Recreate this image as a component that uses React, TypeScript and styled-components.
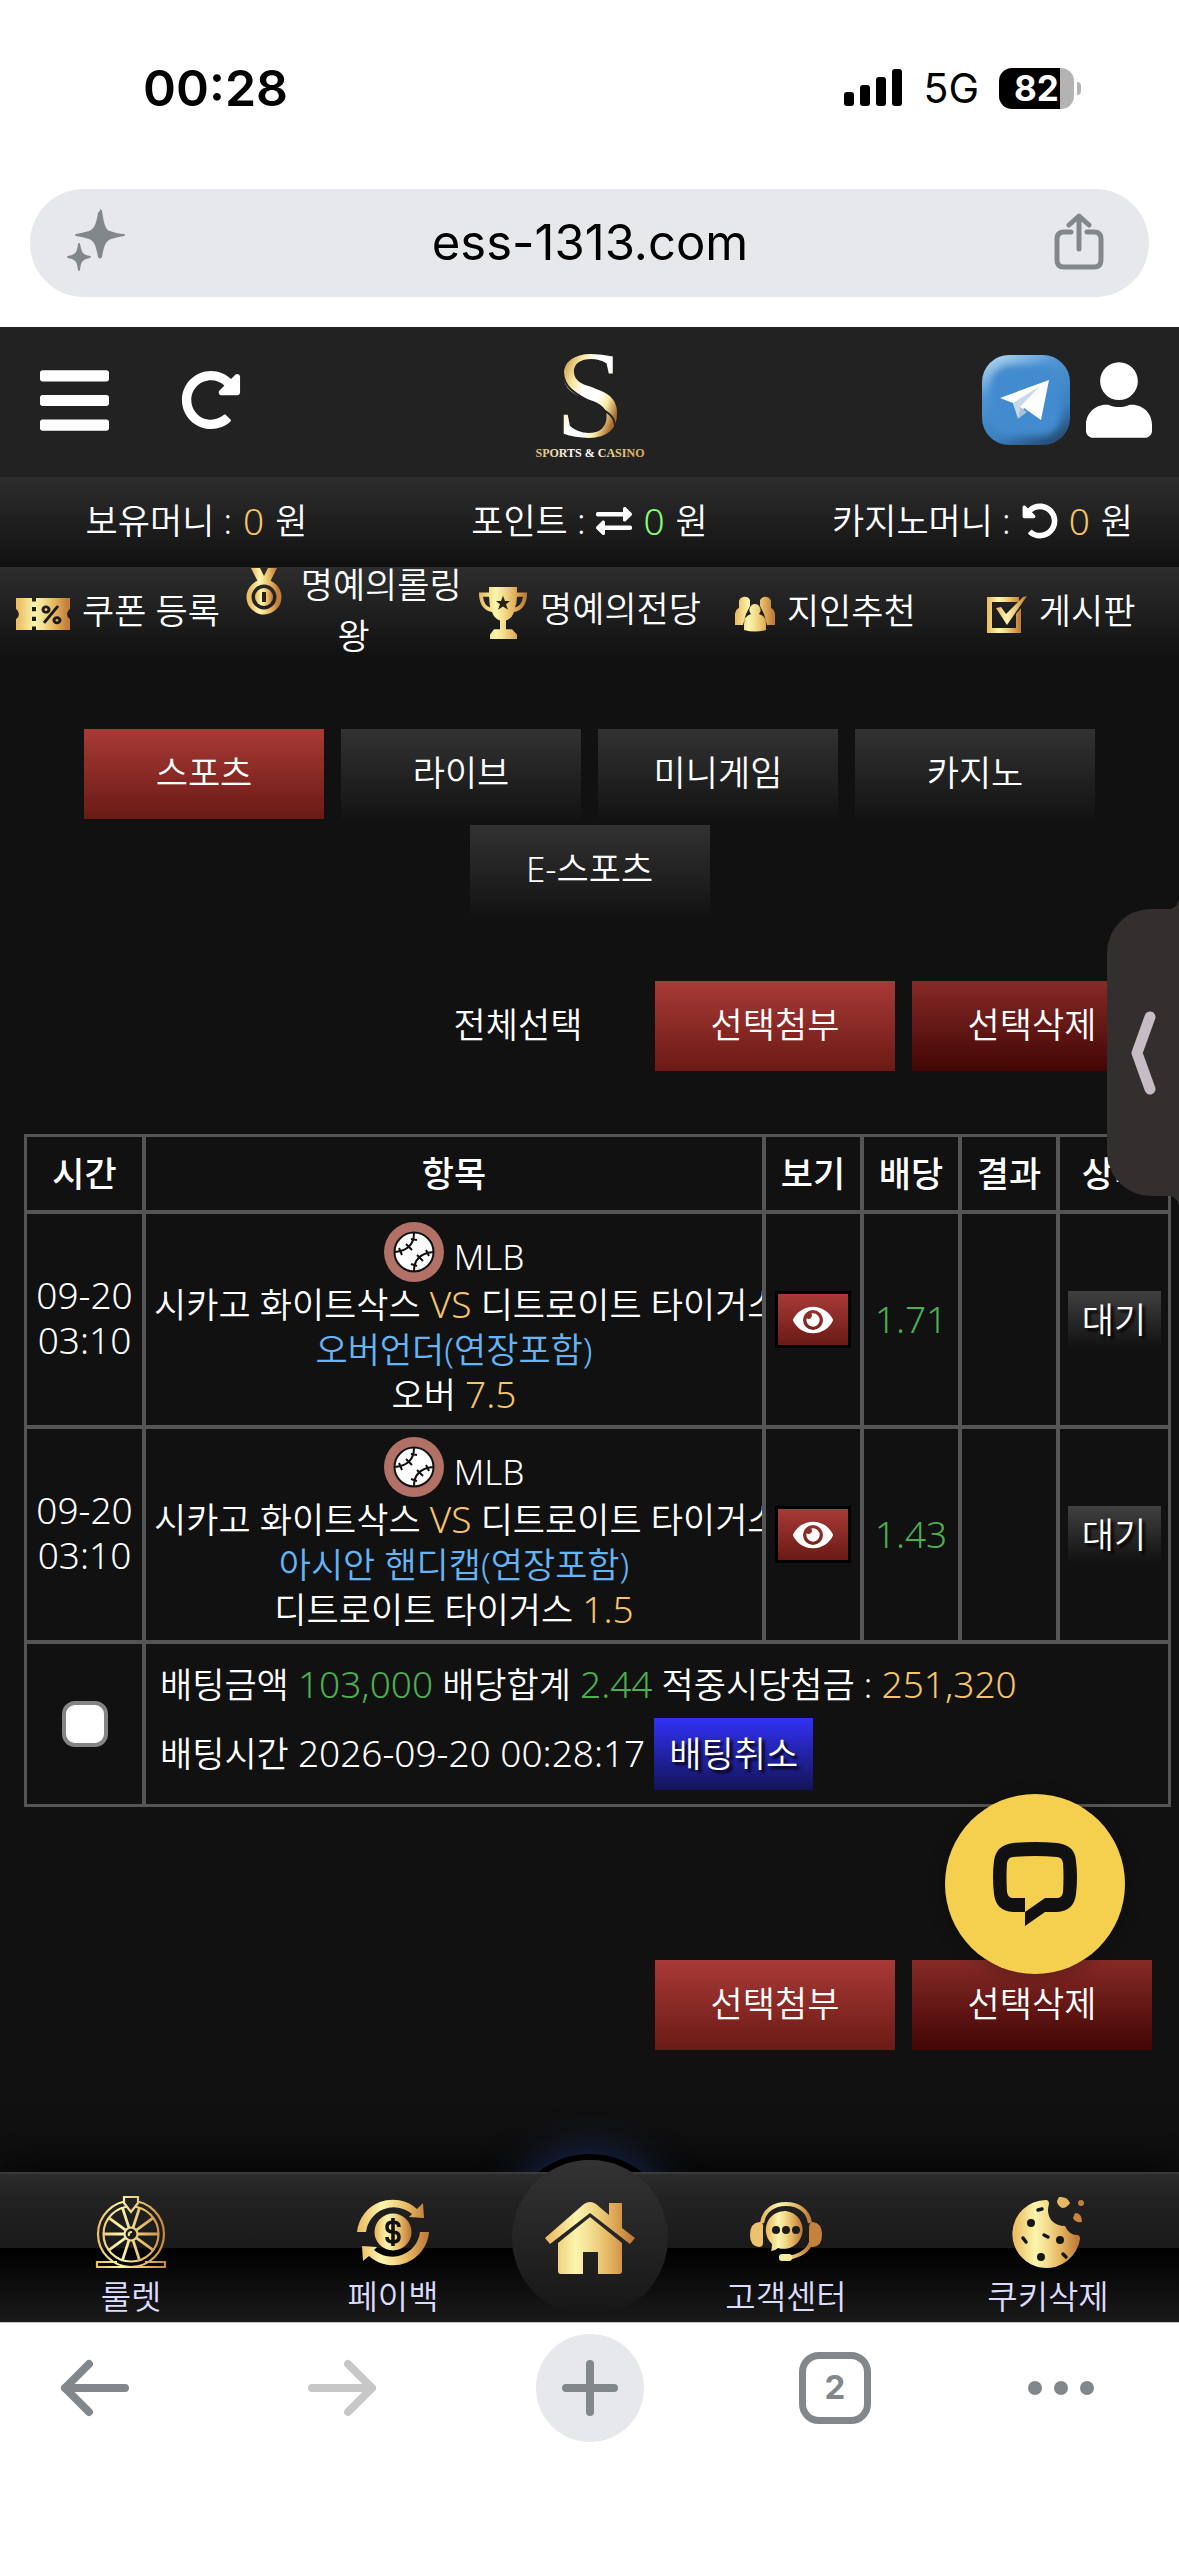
import React from "react";
import styled, { createGlobalStyle } from "styled-components";
import { FaBars, FaExchangeAlt, FaEye, FaRedoAlt, FaUndoAlt, FaUser } from "react-icons/fa";

const GlobalStyle = createGlobalStyle`
  *, *::before, *::after { box-sizing: border-box; }
  html, body { margin: 0; background: #fff; }
  body { font-family: "Noto Sans", "Noto Sans CJK KR", sans-serif; font-weight: 350; font-size: 35px; line-height: 45px; color: #fff; }
  button { font: inherit; color: inherit; border: 0; padding: 0; background: none; cursor: pointer; }
  a { color: inherit; text-decoration: none; }
  svg { display: block; flex: none; overflow: visible; }
`;

const ui = `"Inter", "Liberation Sans", sans-serif`;
const fade = (from: string, to: string) => `linear-gradient(${from}, ${to})`;

const Page = styled.div`
  min-height: 100vh;
  display: flex;
  flex-direction: column;
`;

/* ---------- browser chrome ---------- */
const StatusBar = styled.div`
  display: flex;
  justify-content: space-between;
  align-items: center;
  height: 176px;
  padding: 0 98px 0 143px;
  font-family: ${ui};
  color: #000;
`;
const Clock = styled.time`
  font-size: 50px;
  font-weight: 600;
`;
const StatusIcons = styled.div`
  display: flex;
  align-items: center;
  gap: 20px;
`;
const Network = styled.span`
  font-size: 41px;
  font-weight: 400;
`;
const Battery = styled.div`
  display: flex;
  align-items: center;
  gap: 3px;
  &::after {
    content: "";
    width: 4px;
    height: 13px;
    border-radius: 0 4px 4px 0;
    background: #b3b3b3;
  }
`;
const BatteryBody = styled.span`
  width: 75px;
  height: 41px;
  border-radius: 13px;
  background: linear-gradient(90deg, #000 82%, #b3b3b3 82%);
  color: #fff;
  font-size: 35px;
  font-weight: 700;
  line-height: 41px;
  text-align: center;
`;
const AddressRow = styled.div`
  padding: 13px 30px 30px;
`;
const AddressBar = styled.div`
  display: flex;
  align-items: center;
  justify-content: space-between;
  height: 108px;
  padding: 0 45px 2px 36px;
  border-radius: 54px;
  background: #e7e8ec;
`;
const Address = styled.span`
  font-family: ${ui};
  font-size: 49px;
  font-weight: 400;
  color: #000;
`;
const BrowserBar = styled.nav`
  position: relative;
  z-index: 1;
  display: grid;
  grid-template-columns: 190fr 304fr 192fr 298fr 154fr;
  justify-items: center;
  align-items: center;
  height: 234px;
  padding: 0 41px 104px 0;
  border-top: 1px solid #c4c4c4;
  background: #fff;
`;
const NewTab = styled.button`
  display: grid;
  place-items: center;
  width: 108px;
  height: 108px;
  border-radius: 50%;
  background: #e7e8ec;
`;
const TabCount = styled.button`
  width: 72px;
  height: 72px;
  border: 7px solid #82878b;
  border-radius: 20px;
  font-family: ${ui};
  font-size: 33px;
  font-weight: 700;
  color: #82878b;
`;

/* ---------- site header ---------- */
const Site = styled.div`
  position: relative;
  flex: 1;
  background: #111;
`;
const Header = styled.header`
  display: grid;
  grid-template-columns: 1fr auto 1fr;
  align-items: center;
  height: 150px;
  padding: 6px 27px 0;
  background: #222;
`;
const HeaderSide = styled.div<{ $end?: boolean }>`
  display: flex;
  align-items: center;
  justify-content: ${(p) => (p.$end ? "flex-end" : "flex-start")};
  gap: ${(p) => (p.$end ? 16 : 72)}px;
  margin-left: ${(p) => (p.$end ? 0 : 13)}px;
  padding-bottom: 10px;
`;
const Balances = styled.section`
  display: grid;
  grid-template-columns: repeat(3, 1fr);
  align-items: center;
  height: 90px;
  padding-bottom: 3px;
  background: ${fade("#2d2d2d", "#111")};
`;
const Balance = styled.div`
  display: flex;
  align-items: center;
  justify-content: center;
  gap: 11px;
`;
const Shortcuts = styled.nav`
  display: grid;
  grid-template-columns: repeat(5, 1fr);
  grid-auto-rows: 86px;
  align-items: center;
  padding-bottom: 4px;
  line-height: 49px;
  text-align: center;
  background: ${fade("#2d2d2d", "#111")};
  svg { display: inline-block; vertical-align: middle; margin: -4px 12px -4px 0; }
`;

/* ---------- shared pieces ---------- */
type Tone = "red" | "deep" | "dark" | "plain";
const tones: Record<Tone, string> = {
  red: fade("#a83a36", "#6a1a15"),
  deep: fade("#862a27", "#420604"),
  dark: fade("#323232", "#131313"),
  plain: "transparent",
};
const Button = styled.button<{ $tone: Tone }>`
  width: 240px;
  height: 90px;
  padding-bottom: 4px;
  background: ${(p) => tones[p.$tone]};
`;
const Figure = styled.span<{ $c?: string }>`
  font-size: 37px;
  line-height: 1;
  color: ${(p) => p.$c ?? "inherit"};
`;
const GOLD = "#f5c469";
const GREEN = "#4caf50";
const BLUE = "#64b5f6";

const Tabs = styled.nav`
  display: flex;
  flex-wrap: wrap;
  justify-content: center;
  gap: 6px 17px;
  padding-top: 72px;
`;
const Actions = styled.div<{ $top: number }>`
  display: flex;
  justify-content: flex-end;
  gap: 17px;
  padding: ${(p) => p.$top}px 27px 0;
`;
const TableArea = styled.div`
  padding: 63px 8px 0 24px;
`;

/* ---------- bets table ---------- */
const BetTable = styled.table`
  width: 100%;
  table-layout: fixed;
  border: 3px solid #555;
  border-collapse: separate;
  border-spacing: 0;
  text-align: center;
  th, td { padding: 8px 0; overflow: hidden; vertical-align: middle; }
  th { height: 73px; padding: 0; font-weight: 500; white-space: nowrap; }
  th + th, td + td { border-left: 4px solid #555; }
  td { border-top: 4px solid #555; }
`;
const Col = styled.col<{ $w?: number }>`
  width: ${(p) => (p.$w ? `${p.$w}px` : "auto")};
`;
const When = styled.td`
  && { padding: 8px 0 12px; }
`;
const Match = styled.td`
  && { padding: 8px; }
`;
const League = styled.div`
  display: flex;
  align-items: flex-end;
  justify-content: center;
  gap: 10px;
  line-height: 50px;
`;
const Line = styled.div<{ $c?: string }>`
  height: 45px;
  color: ${(p) => p.$c ?? "inherit"};
  white-space: nowrap;
`;
const ViewButton = styled.button`
  display: inline-grid;
  place-items: center;
  width: 76px;
  height: 57px;
  border: 3px solid #000;
  background: ${tones.red};
  vertical-align: middle;
`;
const State = styled.button`
  width: 93px;
  height: 57px;
  background: ${fade("#404040", "#111")};
  text-shadow: 3px 3px 3px #000;
  vertical-align: middle;
`;
const Summary = styled.td`
  && { padding: 8px 14px 14px; }
  text-align: left;
  line-height: 66px;
`;
const Cancel = styled.button`
  height: 72px;
  padding: 0 15px;
  line-height: 72px;
  background: ${fade("#3131f6", "#141458")};
  text-shadow: 3px 3px 3px #000;
`;
const Check = styled.input`
  appearance: none;
  display: block;
  width: 46px;
  height: 46px;
  margin: 0 auto;
  border: 4px solid #858585;
  border-radius: 13px;
  background: #fff;
`;

/* ---------- floating controls ---------- */
const Drawer = styled.button`
  position: absolute;
  top: 582px;
  right: 0;
  display: grid;
  place-items: center;
  width: 72px;
  height: 287px;
  border-radius: 44px 0 0 44px;
  background: #332f2f;
  &::before, &::after {
    content: "";
    position: absolute;
    right: 0;
    width: 9px;
    height: 12px;
    background: radial-gradient(9px 12px at 0 0, transparent 98%, #332f2f 100%);
  }
  &::before { top: -12px; }
  &::after { bottom: -12px; transform: scaleY(-1); }
`;
const Chat = styled.button`
  position: absolute;
  right: 54px;
  bottom: 198px;
  display: grid;
  place-items: center;
  width: 180px;
  height: 180px;
  border-radius: 50%;
  background: #f5d04e;
  box-shadow: 0 3px 18px rgba(0, 0, 0, 0.25);
`;

/* ---------- site bottom nav ---------- */
const Dock = styled.nav`
  position: relative;
  z-index: 0;
  display: flex;
  height: 150px;
  box-shadow: 0 -10px 36px 4px #060606;
  font-size: 33px;
  color: #dcdcff;
  &::before {
    content: "";
    position: absolute;
    inset: 0;
    z-index: -1;
    border-top: 2px solid #3a3a3a;
    background: linear-gradient(#2c2c2c, #222 16%, #1a1a1a 50%, #000 50%, #1a1a1a);
  }
`;
const DockItem = styled.a`
  flex: 2 1 0;
  display: flex;
  flex-direction: column;
  align-items: center;
  justify-content: flex-end;
  padding-bottom: 3px;
`;
const DockIcon = styled.span`
  display: grid;
  place-items: center;
  height: 84px;
`;
const HomeSlot = styled.div`
  flex: 1 1 0;
  min-width: 0;
  display: flex;
  justify-content: center;
`;
const HomeLink = styled.a`
  position: relative;
  flex: none;
  display: grid;
  place-items: center;
  width: 156px;
  height: 156px;
  margin-top: -12px;
  border-radius: 50%;
  background: ${fade("#333", "#161616")};
  &::before {
    content: "";
    position: absolute;
    inset: 0;
    z-index: -2;
    border-radius: 50%;
    box-shadow: 0 0 0 6px #000, 0 0 40px 8px #1a2a58;
  }
`;

/* ---------- drawings ---------- */
const GoldFill = ({ id }: { id: string }) => (
  <defs>
    <linearGradient id={id} x1="0" x2="1" y1="0" y2="0">
      <stop offset="0.05" stopColor="#ecbf67" />
      <stop offset="0.34" stopColor="#fbf5ad" />
      <stop offset="0.5" stopColor="#f4df92" />
      <stop offset="0.7" stopColor="#e6b863" />
      <stop offset="0.95" stopColor="#c27f3b" />
    </linearGradient>
  </defs>
);

const Sparkle = () => (
  <svg width="60" height="66" viewBox="0 0 60 66" fill="#82878b">
    <path d="M34 0q1 0 2 2c2 14 4 19 8 20q8 3 14 3q2 1 0 2q-6 1-13 3c-5 2-7 6-9 18q-2 3-4 0c-2-12-4-16-9-18q-6-2-13-3q-2-1 0-2q6-1 13-3c5-2 7-6 9-18q1-2 2-2z" />
    <path d="M13 34q1 0 1 1c2 8 2 9 6 11l4 1q2 0 0 2l-4 1c-4 2-5 3-6 11q-1 2-2 0c-1-8-2-9-6-11l-4-1q-2-1 0-2l4-1c4-2 5-3 6-11q0-1 1-1z" />
  </svg>
);
const Share = () => (
  <svg width="50" height="58" viewBox="0 0 50 58" fill="none" stroke="#82878b" strokeWidth="5" strokeLinecap="round" strokeLinejoin="round">
    <path d="M17 19h-7q-7 0-7 7v21q0 7 7 7h30q7 0 7-7V26q0-7-7-7h-7M25 36V4M15 12L25 3l10 9" />
  </svg>
);
const Signal = () => (
  <svg width="59" height="38" viewBox="0 0 59 38">
    <rect x="0" y="23" width="10" height="14" rx="3" />
    <rect x="16" y="16" width="10" height="21" rx="3" />
    <rect x="32" y="8" width="10" height="29" rx="3" />
    <rect x="48" y="0" width="10" height="37" rx="3" />
  </svg>
);
const Logo = () => (
  <svg width="112" height="110" viewBox="0 0 112 110" role="img" aria-label="S Sports & Casino">
    <defs>
      <linearGradient id="logoGold" x1="0" x2="1" y1="0.1" y2="0.9">
        <stop offset="0.15" stopColor="#c9994a" />
        <stop offset="0.3" stopColor="#f8e7a0" />
        <stop offset="0.42" stopColor="#ffffff" />
        <stop offset="0.58" stopColor="#ffffff" />
        <stop offset="0.68" stopColor="#f7e9a2" />
        <stop offset="0.8" stopColor="#a8692e" />
        <stop offset="1" stopColor="#f3d487" />
      </linearGradient>
      <linearGradient id="logoWord" x1="0" x2="1">
        <stop offset="0" stopColor="#dcb867" />
        <stop offset="0.35" stopColor="#fff" />
        <stop offset="0.55" stopColor="#fff" />
        <stop offset="0.7" stopColor="#eed58e" />
        <stop offset="1" stopColor="#d2a75a" />
      </linearGradient>
    </defs>
    <text x="56" y="87" textAnchor="middle" fontFamily="Liberation Serif, serif" fontSize="125" fontWeight="400" fill="url(#logoGold)">S</text>
    <path d="M29 22c1 17 14 22 29 31s23 12 23 24" fill="none" stroke="#222" strokeWidth="2" />
    <text x="56" y="107" textAnchor="middle" fontFamily="Liberation Serif, serif" fontSize="12" fontWeight="700" fill="url(#logoWord)">SPORTS &amp; CASINO</text>
  </svg>
);
const Telegram = () => (
  <svg width="88" height="90" viewBox="0 0 88 90">
    <defs>
      <linearGradient id="tgEdge" x1="0.2" x2="0.7" y1="0" y2="1">
        <stop offset="0" stopColor="#a9d0ee" />
        <stop offset="0.3" stopColor="#4f95d3" />
        <stop offset="0.75" stopColor="#3b7fbe" />
        <stop offset="1" stopColor="#27507b" />
      </linearGradient>
      <filter id="tgSoft"><feGaussianBlur stdDeviation="3" /></filter>
    </defs>
    <rect width="88" height="90" rx="27" fill="url(#tgEdge)" />
    <rect x="9" y="11" width="70" height="69" rx="20" fill="#438bcf" filter="url(#tgSoft)" />
    <path d="M18 43L67 25l-8 40-17-12-5 10-6-15z" fill="#fff" />
    <path d="M31 48L58 31 38 52l-2 12z" fill="#c8daea" />
    <path d="M38 52l7 5-9 7z" fill="#a9c3d8" />
  </svg>
);
const Coupon = () => (
  <svg width="54" height="32" viewBox="0 0 54 36" preserveAspectRatio="none">
    <GoldFill id="gCoupon" />
    <path d="M0 0h16v4h4V0h34v12q-6 6 0 12v12H20v-4h-4v4H0V24q6-6 0-12z" fill="url(#gCoupon)" />
    <path d="M16 10h4v5h-4zM16 21h4v5h-4z" fill="#1c1c1c" />
    <g stroke="#1c1c1c" strokeWidth="3" fill="none"><path d="M28 28L42 9" /><circle cx="30" cy="13" r="3" /><circle cx="41" cy="25" r="3" /></g>
  </svg>
);
const Medal = () => (
  <svg width="43" height="52" viewBox="0 0 43 52">
    <GoldFill id="gMedal" />
    <path d="M5 5h9l4 8 4-8h9l-7 14H12z" fill="url(#gMedal)" />
    <circle cx="18" cy="34" r="15" fill="none" stroke="url(#gMedal)" strokeWidth="5" />
    <circle cx="18" cy="34" r="9" fill="url(#gMedal)" />
    <path d="M16 29h4v10h-4z" fill="#2a2212" />
  </svg>
);
const Trophy = () => (
  <svg width="50" height="54" viewBox="0 0 50 50" preserveAspectRatio="none">
    <GoldFill id="gTrophy" />
    <path d="M11 1h28v5h10q0 16-13 18-2 6-8 8v8h6l5 5v4H12v-4l4-5h6v-8q-6-2-8-8Q1 22 1 6h10zm0 9H5q1 8 7 10zm28 0q0 6-2 10 7-2 8-10z" fill="url(#gTrophy)" />
    <path d="M25 9l2 5h5l-4 3 2 5-5-3-5 3 2-5-4-3h5z" fill="#2a2212" />
  </svg>
);
const People = () => (
  <svg width="40" height="36" viewBox="0 0 40 36">
    <GoldFill id="gPeople" />
    <g fill="url(#gPeople)">
      <path d="M4 5a6 6 0 0 1 11-1v6l-4 8-3 11H0V18q1-5 4-6zM36 5a6 6 0 0 0-11-1v6l4 8 3 11h8V18q-1-5-4-6zM20 8a6 6 0 0 1 4 10q7 2 7 10v6q-11 3-22 0v-6q0-8 7-10a6 6 0 0 1 4-10z" />
    </g>
  </svg>
);
const CheckBoard = () => (
  <svg width="40" height="37" viewBox="0 0 40 37">
    <GoldFill id="gBoard" />
    <path d="M0 1h32v5H5v26h24V18l5-6v25H0z" fill="url(#gBoard)" />
    <path d="M9 12l5-1 5 7L36 1l4-1L20 29z" fill="url(#gBoard)" />
  </svg>
);
const Baseball = () => (
  <svg width="60" height="60" viewBox="0 0 60 60" fill="none" stroke="#111" strokeWidth="2">
    <circle cx="30" cy="30" r="30" fill="#b27166" stroke="none" />
    <circle cx="30" cy="30" r="19.5" fill="#fff" />
    <path d="M30 11q0 17-19 19M49 30q-19 2-19 19" />
    <path d="M27 17l6 1M22 22l6 6M15 26l3 7M42 28l3 6M33 33l6 6M27 42l6 2" />
  </svg>
);
const Chevron = () => (
  <svg width="28" height="84" viewBox="0 0 28 84" fill="none" stroke="#c6bcc4" strokeWidth="11" strokeLinecap="round" strokeLinejoin="round">
    <path d="M21 6L8 42l13 36" />
  </svg>
);
const ChatIcon = () => (
  <svg width="84" height="84" viewBox="0 0 84 84" fill="#111">
    <path fillRule="evenodd" d="M20 1q22-2 44 0 18 2 19 18 2 16 0 33-2 17-19 18H52L32 84V56H20q-5 0-6-6-1-16 0-29 1-6 6-6 22-2 44 0 5 0 6 6 1 14 0 29-1 6-6 6H52L32 70H20Q3 69 1 52q-2-17 0-33Q3 3 20 1z" />
  </svg>
);
const Roulette = () => (
  <svg width="72" height="72" viewBox="0 0 72 72" fill="none" stroke="url(#gWheel)" strokeWidth="2.2">
    <defs>
      <linearGradient id="gWheel" gradientUnits="userSpaceOnUse" x1="0" x2="72" y1="0" y2="0">
        <stop offset="0.05" stopColor="#ecbf67" /><stop offset="0.35" stopColor="#fbf5ad" /><stop offset="0.7" stopColor="#e6b863" /><stop offset="1" stopColor="#c27f3b" />
      </linearGradient>
    </defs>
    <circle cx="36" cy="38" r="33" />
    <circle cx="36" cy="38" r="27.5" />
    <circle cx="36" cy="38" r="6.5" />
    <path d="M34 40q-1-4 3-4" />
    <path
      strokeWidth="2.8"
      d={Array.from({ length: 10 }, (_, i) => {
        const a = (i * Math.PI) / 5;
        const at = (r: number) => `${36 + r * Math.cos(a)} ${38 + r * Math.sin(a)}`;
        return `M${at(7)}L${at(27)}`;
      }).join("")}
    />
    <path d="M29 1h14v6l-7 9-7-9z" fill="#222" />
    <path d="M22 66H2v5h68v-5H50" />
  </svg>
);
const Payback = () => (
  <svg width="72" height="72" viewBox="0 0 72 72">
    <GoldFill id="gPay" />
    <path d="M0 36A36 36 0 0 1 60 13l6-6 1 15-15-1 3-3A28 28 0 0 0 9 36zM72 36A36 36 0 0 1 12 60l-6 5-1-15 15 1-3 3A28 28 0 0 0 63 36z" fill="url(#gPay)" />
    <circle cx="36" cy="36" r="18.5" fill="url(#gPay)" />
    <path d="M42 31q0-5-6-5t-6 5 6 5 6 5-6 5-6-5M36 22v28" fill="none" stroke="#111" strokeWidth="3.6" />
  </svg>
);
const Home = () => (
  <svg width="90" height="72" viewBox="0 0 90 72">
    <GoldFill id="gHome" />
    <path d="M39 2q6-4 12 0l13 11V1h13v25l13 10-5 6L45 11 5 42l-5-6zM45 15l32 26v28q0 3-3 3H53V50H38v22H16q-3 0-3-3V41z" fill="url(#gHome)" />
  </svg>
);
const Headset = () => (
  <svg width="72" height="60" viewBox="0 0 72 60">
    <GoldFill id="gHead" />
    <path
      d="M12 21C14 8 24 2 36 2s22 6 24 19M61 40q-4 13-24 16"
      fill="none"
      stroke="url(#gHead)"
      strokeWidth="4"
    />
    <g fill="url(#gHead)">
      <path d="M36 9a19 19 0 1 1-8 37q-3 3-7 3 1-3 1-7A19 19 0 0 1 36 9z" />
    </g>
    <path d="M9 20q5 0 4 6v15q0 4-4 4-9-1-9-12 0-12 9-13z" fill="#ecc26c" />
    <path d="M63 20q-4 0-4 6v15q0 4 4 4 9-1 9-12 0-12-9-13z" fill="#c5823d" />
    <rect x="29" y="52" width="13" height="7" rx="3" fill="#f8eb9f" />
    <g fill="#1c1c1c"><circle cx="26" cy="28" r="4" /><circle cx="36" cy="28" r="4" /><circle cx="46" cy="28" r="4" /></g>
  </svg>
);
const Cookie = () => (
  <svg width="72" height="72" viewBox="0 0 72 72">
    <GoldFill id="gCookie" />
    <g fill="url(#gCookie)">
      <path d="M34 4q3 0 3 4-3 10 3 17 5 5 13 5 4 9 12 9 3 0 3 4A34 34 0 1 1 34 4z" />
    </g>
    <path d="M47 1q8-1 11 6-3 5-8 5-5-3-5-7z" fill="#e6b863" />
    <path d="M63 17q7 0 7 9-7 1-9-4z" fill="#c9843e" />
    <circle cx="69" cy="7" r="3" fill="#c27f3b" />
    <g fill="#161616"><circle cx="19" cy="27" r="4" /><circle cx="48" cy="44" r="4" /><circle cx="29" cy="61" r="4" /></g>
    <path d="M26 14l4-1M11 42l3 4M32 39l4 2M51 58l3 3" stroke="#161616" strokeWidth="3.5" strokeLinecap="round" />
  </svg>
);
const Arrow = ({ forward }: { forward?: boolean }) => (
  <svg width="68" height="56" viewBox="0 0 68 56" fill="none" stroke={forward ? "#c7c7c7" : "#82878b"} strokeWidth="8" strokeLinecap="round" strokeLinejoin="round">
    <path d={forward ? "M4 28h60M40 4l24 24-24 24" : "M64 28H4M28 4L4 28l24 24"} />
  </svg>
);
const Plus = () => (
  <svg width="56" height="56" viewBox="0 0 56 56" stroke="#82878b" strokeWidth="8" strokeLinecap="round">
    <path d="M28 4v48M4 28h48" />
  </svg>
);
const Dots = () => (
  <svg width="68" height="16" viewBox="0 0 68 16" fill="#82878b">
    <circle cx="8" cy="8" r="7" /><circle cx="34" cy="8" r="7" /><circle cx="60" cy="8" r="7" />
  </svg>
);

/* ---------- data ---------- */
const shortcuts = [
  { label: "쿠폰 등록", icon: <Coupon /> },
  { label: "명예의롤링왕", icon: <Medal /> },
  { label: "명예의전당", icon: <Trophy /> },
  { label: "지인추천", icon: <People /> },
  { label: "게시판", icon: <CheckBoard /> },
];
const tabs = ["스포츠", "라이브", "미니게임", "카지노", "E-스포츠"];
const bets = [
  { market: "오버언더(연장포함)", pick: "오버", line: "7.5", odds: "1.71" },
  { market: "아시안 핸디캡(연장포함)", pick: "디트로이트 타이거스", line: "1.5", odds: "1.43" },
];

const DockLink = ({ label, icon }: { label: string; icon: React.ReactNode }) => (
  <DockItem href="#">
    <DockIcon>{icon}</DockIcon>
    {label}
  </DockItem>
);

export default function App() {
  return (
    <Page>
      <GlobalStyle />
      <StatusBar>
        <Clock>00:28</Clock>
        <StatusIcons>
          <Signal />
          <Network>5G</Network>
          <Battery><BatteryBody>82</BatteryBody></Battery>
        </StatusIcons>
      </StatusBar>
      <AddressRow>
        <AddressBar>
          <Sparkle />
          <Address>ess-1313.com</Address>
          <button aria-label="공유"><Share /></button>
        </AddressBar>
      </AddressRow>

      <Site>
        <Header>
          <HeaderSide>
            <button aria-label="메뉴"><FaBars size={79} style={{ width: 69 }} /></button>
            <button aria-label="새로고침"><FaRedoAlt size={60} /></button>
          </HeaderSide>
          <Logo />
          <HeaderSide $end>
            <a href="#" aria-label="텔레그램"><Telegram /></a>
            <a href="#" aria-label="내 정보"><FaUser size={76} style={{ width: 66 }} /></a>
          </HeaderSide>
        </Header>
        <Balances>
          <Balance>보유머니 : <Figure $c={GOLD}>0</Figure> 원</Balance>
          <Balance>포인트 : <FaExchangeAlt size={36} /> <Figure $c="#86ff72">0</Figure> 원</Balance>
          <Balance>카지노머니 : <FaUndoAlt size={36} /> <Figure $c={GOLD}>0</Figure> 원</Balance>
        </Balances>
        <Shortcuts>
          {shortcuts.map((s) => (
            <a key={s.label} href="#">{s.icon}{s.label}</a>
          ))}
        </Shortcuts>

        <main>
          <Tabs>
            {tabs.map((t, i) => (
              <Button key={t} $tone={i === 0 ? "red" : "dark"}>{t}</Button>
            ))}
          </Tabs>
          <Actions $top={66}>
            <Button $tone="plain">전체선택</Button>
            <Button $tone="red">선택첨부</Button>
            <Button $tone="deep">선택삭제</Button>
          </Actions>
          <TableArea>
            <BetTable>
              <colgroup>
                <Col $w={115} /><Col /><Col $w={98} /><Col $w={98} /><Col $w={98} /><Col $w={112} />
              </colgroup>
              <thead>
                <tr><th>시간</th><th>항목</th><th>보기</th><th>배당</th><th>결과</th><th>상태</th></tr>
              </thead>
              <tbody>
                {bets.map((b) => (
                  <tr key={b.odds}>
                    <When><Figure>09-20</Figure><br /><Figure>03:10</Figure></When>
                    <Match>
                      <League><Baseball />MLB</League>
                      <Line>시카고 화이트삭스 <Figure $c={GOLD}>VS</Figure> 디트로이트 타이거스</Line>
                      <Line $c={BLUE}>{b.market}</Line>
                      <Line>{b.pick} <Figure $c={GOLD}>{b.line}</Figure></Line>
                    </Match>
                    <td><ViewButton aria-label="보기"><FaEye size={40} /></ViewButton></td>
                    <td><Figure $c={GREEN}>{b.odds}</Figure></td>
                    <td />
                    <td><State>대기</State></td>
                  </tr>
                ))}
                <tr>
                  <td><Check type="checkbox" aria-label="배팅 선택" /></td>
                  <Summary colSpan={5}>
                    <div>
                      배팅금액 <Figure $c={GREEN}>103,000</Figure> 배당합계 <Figure $c={GREEN}>2.44</Figure> 적중시당첨금 : <Figure $c={GOLD}>251,320</Figure>
                    </div>
                    <div>배팅시간 <Figure>2026-09-20 00:28:17</Figure> <Cancel>배팅취소</Cancel></div>
                  </Summary>
                </tr>
              </tbody>
            </BetTable>
          </TableArea>
          <Actions $top={153}>
            <Button $tone="red">선택첨부</Button>
            <Button $tone="deep">선택삭제</Button>
          </Actions>
        </main>
        <Drawer aria-label="패널 열기"><Chevron /></Drawer>
        <Chat aria-label="채팅"><ChatIcon /></Chat>
      </Site>

      <Dock>
        <DockLink label="룰렛" icon={<Roulette />} />
        <DockLink label="페이백" icon={<Payback />} />
        <HomeSlot><HomeLink href="#" aria-label="홈"><Home /></HomeLink></HomeSlot>
        <DockLink label="고객센터" icon={<Headset />} />
        <DockLink label="쿠키삭제" icon={<Cookie />} />
      </Dock>

      <BrowserBar>
        <button aria-label="뒤로"><Arrow /></button>
        <button aria-label="앞으로"><Arrow forward /></button>
        <NewTab aria-label="새 탭"><Plus /></NewTab>
        <TabCount>2</TabCount>
        <button aria-label="더보기"><Dots /></button>
      </BrowserBar>
    </Page>
  );
}
